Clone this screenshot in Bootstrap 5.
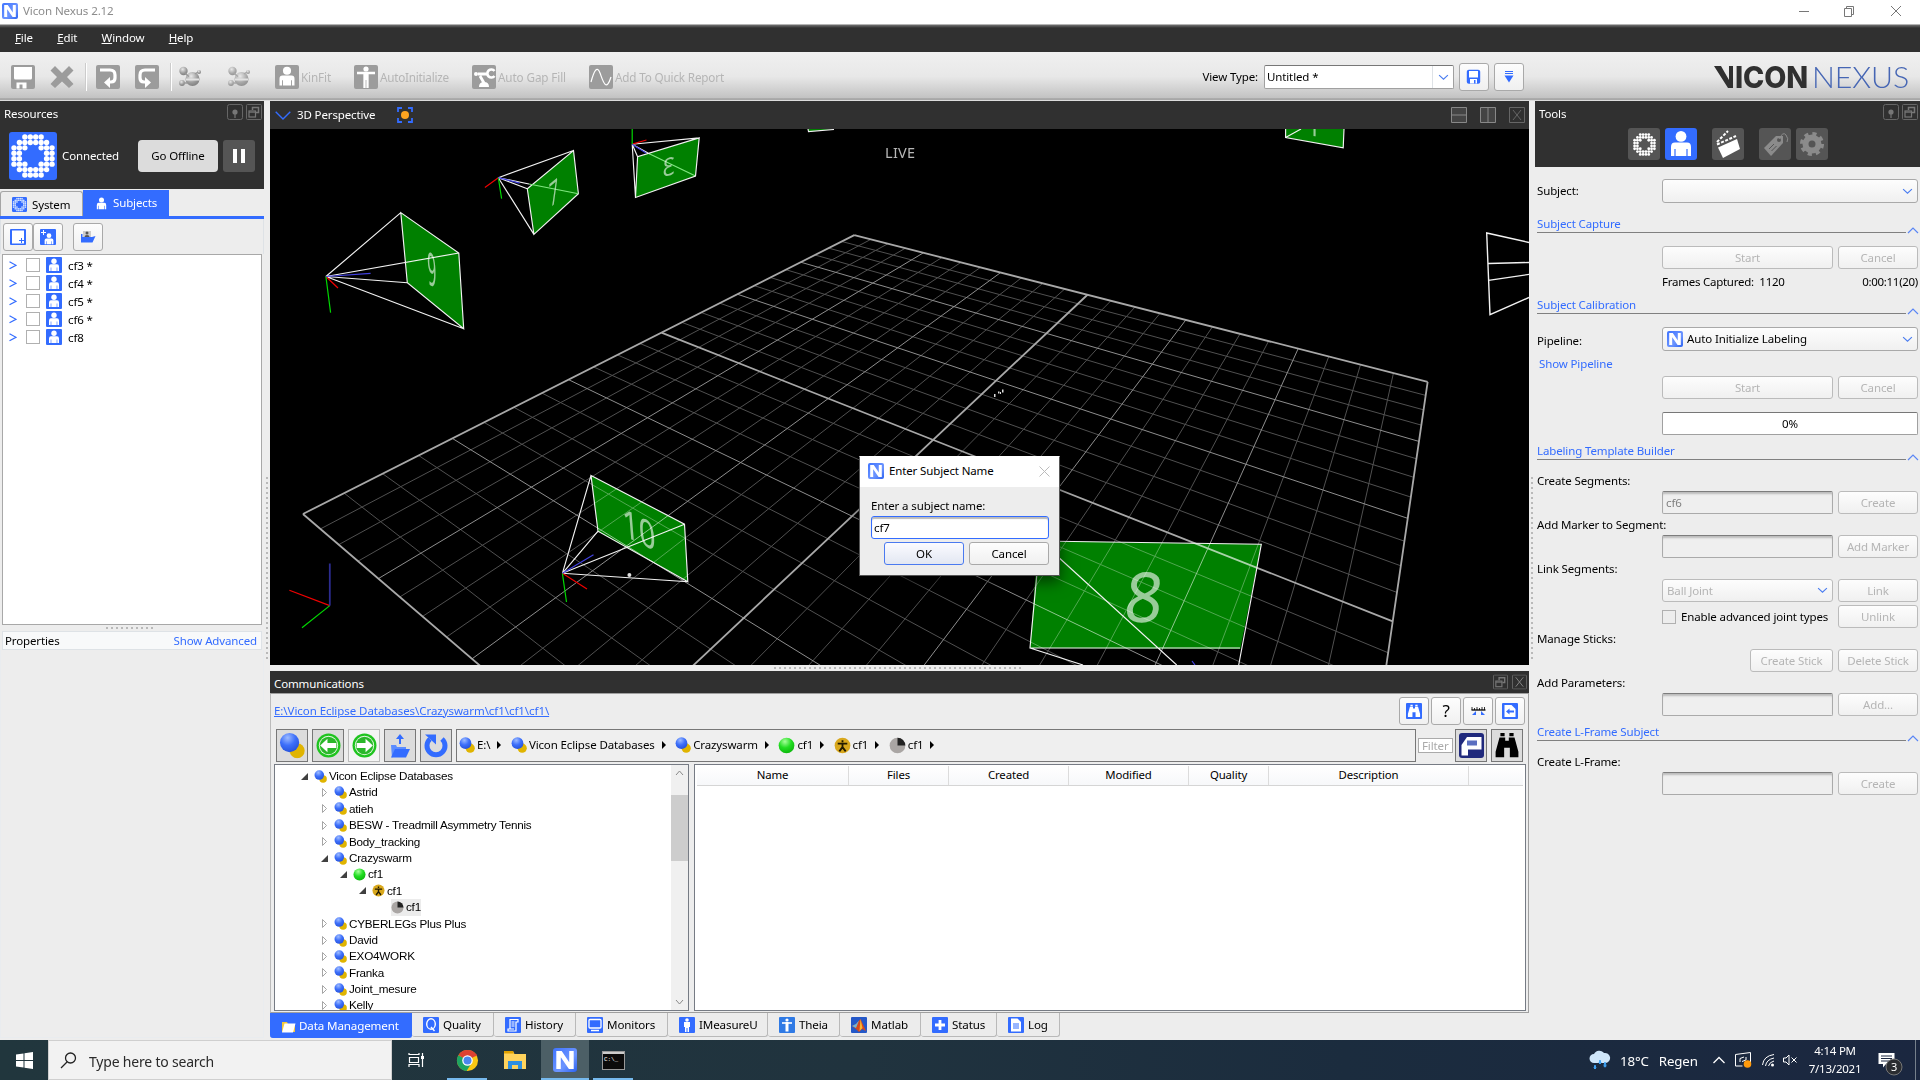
<!DOCTYPE html>
<html lang="en">
<head>
<meta charset="utf-8">
<title>Vicon Nexus 2.12</title>
<link href="https://cdn.jsdelivr.net/npm/bootstrap@5.3.0/dist/css/bootstrap.min.css" rel="stylesheet">
<style>
:root{--blue:#336cff;--dark:#303030;--face:#ededed}
html,body{height:1080px;width:1920px;overflow:hidden}
body{font-family:"Noto Sans","Open Sans",sans-serif;font-size:11.5px;letter-spacing:-.13px;line-height:16px;color:#000;background:var(--face);white-space:nowrap}
svg{display:block;flex:none}
.blue{color:var(--blue)}
.titlebar{height:24px;background:#fff;color:#8c8c8c;padding:0 18px 2px 2px}
.titlebar .cap{margin-left:5px;font-size:11.6px}
.menubar{height:28px;background:linear-gradient(#b4b4b4 0 1px,#6e6e6e 1px,#303030 4px);color:#fff;padding:0 0 0 15px}
.menubar span::first-letter{text-decoration:underline}
.menubar span{margin-right:24.300px}
.toolbar{height:49px;background:linear-gradient(#f0f0f0,#e8e8e8 50%,#c2c2c2 94%,#8f8f8f 96%,#dcdcdc 99%);color:#b5b5b5;padding:1px 12px 0 11px}
.logo{overflow:visible}
.vbtn{border:1px solid #a9a9a9;border-radius:3px;background:linear-gradient(#fdfdfd,#f0f0f0);display:flex;align-items:center;justify-content:center;flex:none}
.field{border:1px solid #a0a0a0;border-top-color:#777;border-radius:2px;background:#fff;display:flex;align-items:center}
.work{height:939px}
.panel-left{width:264px}
.dark{background:var(--dark);color:#fff}
.splitv{width:6px;position:relative}
.splitv::after{content:"";position:absolute;left:2px;top:376px;height:184px;width:2px;background:repeating-linear-gradient(#b9b9b9 0 2px,transparent 2px 5px)}
.tabsrow{height:27px;padding-top:1px}
.tab-sys{width:83px;height:26px;border:1px solid #a5a5a5;border-bottom:0;border-radius:3px 3px 0 0;padding-left:11px;margin-top:1px}
.tab-sub{width:86px;height:26px;background:var(--blue);color:#fff;padding-left:12px}
.tabgap{gap:5px}
.srow{height:18px;padding-left:6px}
.cbx{width:14px;height:14px;border:1px solid #b0b0b0;background:#fff;flex:none}
.ltree{height:371px;margin:0 2px;border:1px solid #a8a8a8;background:#fff;padding-top:1px}
.dots-h{background:repeating-linear-gradient(90deg,#b9b9b9 0 2px,transparent 2px 5px);height:2px}
.center{width:1259px}
.vhead{height:28px;padding-left:5px}
.comm{height:320px;border:1px solid #9f9f9f;border-left:1px solid #bbb;position:relative}
.dbtn{width:32px;height:33px;border:1px solid #777;background:#dcdcdc;display:flex;align-items:center;justify-content:center;flex:none}
.crumbs{width:960px;height:33px;border:1px solid #777;background:#efefef;padding:0 0 1px 2px;font-size:11.5px}
.crumbs span{margin:0 7px 0 2px}.crumbs b{border-left:4px solid #000;border-top:4px solid transparent;border-bottom:4px solid transparent;margin-right:9.500px}
.ctree{width:415px;height:247px;border:1px solid #767b84;background:#fff;overflow:hidden;font:11.7px/16.4px "Liberation Sans",Arial,sans-serif;letter-spacing:-.23px}
.crow{height:16.4px}
.crow .tg{width:9px;margin-right:5px}
.i1{padding-left:25px}.i2{padding-left:45px}.i3{padding-left:64px}.i4{padding-left:83px}.i5{padding-left:102px}
.sbar{width:17px;background:#f0f0f0;padding:5px 0}
.thumb{height:66px;background:#cdcdcd}
.clist{width:832px;height:247px;border:1px solid #767b84;background:#fff;margin-left:5px}
.chead{height:20px;border-bottom:1px solid #d5d5d5;margin:1px 2px;background:linear-gradient(#fff,#f7f8fa);text-align:center;font-size:11.4px;line-height:17px}
.chead div{border-right:1px solid #dcdcdc}
.btabs{height:27px}
.bt{height:24px;border:1px solid #b9b9b9;border-top:0;border-left:0;border-radius:0 0 3px 3px;display:flex;align-items:center;background:#ececec;padding-left:11px;padding-top:1px;gap:4px;font-size:11.6px}
.bt.act{height:25px;background:var(--blue);color:#fff;border-color:var(--blue);gap:3px;padding-top:2px}
.right{width:385px}
.ticon{width:32px;height:32px;border-radius:3px;background:#555;display:flex;align-items:center;justify-content:center}
.form{padding:12px 2px 0 2px}
.rr{height:23px;gap:5px;justify-content:flex-end}
.rr>.vbtn{height:23px;color:#b5b5b5;border-color:#bbb}
.w171{width:171px}.w80{width:80px}.w256{width:256px}.w83{width:83px}
.dis{background:#efefef;color:#808080;height:23px;border-color:#aaa;border-top-color:#7d7d7d;box-shadow:inset 0 3px 2px -1px #bbb;padding-left:3px}
.lab{height:21px;line-height:21px}
.sect{height:18px;color:var(--blue);line-height:18px;position:relative;margin-right:12px;border-bottom:1px solid #808080}
.sect svg{position:absolute;right:-13px;bottom:-2px}
.taskbar{height:40px;background:linear-gradient(90deg,#21363d,#20333e 45%,#1b2c3e 70%,#1b2740);color:#fff}
.search{width:344px;height:40px;background:#f2f2f2;border:1px solid #cfcfcf;color:#2a2a2a;font-size:14px;letter-spacing:-.2px;padding-left:11px;gap:12px}
.tk{height:40px;display:flex;align-items:center;justify-content:center}
.run{border-bottom:2px solid #76b9ed;padding-top:2px}
.dialog-box{position:absolute;left:859px;top:456px;width:201px;height:120px;background:var(--face);border:1px solid #555;box-shadow:0 6px 14px rgba(0,0,0,.55);border-top-color:#fff}
.dlg-title{height:30px;background:#fff;padding:0 9px 2px 8px}
</style>
<script src="https://cdn.jsdelivr.net/npm/bootstrap@5.3.0/dist/js/bootstrap.bundle.min.js"></script>
</head>
<body>
<svg width="0" height="0" class="position-absolute">
<defs>
<linearGradient id="ng" x1="0" y1="0" x2="1" y2="1"><stop offset="0" stop-color="#3f74ff"/><stop offset=".6" stop-color="#6d95ff"/><stop offset="1" stop-color="#2b62f0"/></linearGradient>
<radialGradient id="bg" cx=".4" cy=".25" r=".8"><stop offset="0" stop-color="#9dbbff"/><stop offset=".5" stop-color="#3d6ffa"/><stop offset="1" stop-color="#2450d8"/></radialGradient>
<radialGradient id="gg" cx=".4" cy=".25" r=".8"><stop offset="0" stop-color="#a6ff9a"/><stop offset=".5" stop-color="#22dd22"/><stop offset="1" stop-color="#0ab40a"/></radialGradient>
<radialGradient id="mg" cx=".4" cy=".3" r=".8"><stop offset="0" stop-color="#e8e8e8"/><stop offset=".6" stop-color="#999"/><stop offset="1" stop-color="#777"/></radialGradient>
<symbol id="n" viewBox="0 0 16 16"><rect width="16" height="16" rx="2" fill="url(#ng)"/><path d="M2.2 14V2H5.800l5 7.500V2h3v12H10.600L5.200 6.200V14z" fill="#fff"/></symbol>
<symbol id="man" viewBox="0 0 16 16"><circle cx="8" cy="4.200" r="2.700" fill="currentColor"/><path d="M3 14V9.500Q3 7.300 5 7.300h6q2 0 2 2.200V14h-1.700v-3.500h-.6V14H5.300v-3.500h-.6V14z" fill="currentColor"/></symbol>
<symbol id="bman" viewBox="0 0 16 16"><rect width="16" height="16" rx="1" fill="#336cff"/><use href="#man" color="#fff"/></symbol>
<symbol id="db" viewBox="0 0 16 16"><circle cx="11.200" cy="11.200" r="4.600" fill="#e0b400"/><circle cx="6.500" cy="6.200" r="5.900" fill="url(#bg)"/></symbol>
<symbol id="grn" viewBox="0 0 16 16"><circle cx="8" cy="8" r="7.400" fill="url(#gg)"/></symbol>
<symbol id="yel" viewBox="0 0 16 16"><circle cx="8" cy="8" r="7.400" fill="#d9a81c"/><path d="M8 3v2M3.500 6.300h9M8 6v4M8 9.500l-3 4M8 9.500l3 4" stroke="#221a00" stroke-width="1.700"/></symbol>
<symbol id="gry" viewBox="0 0 16 16"><circle cx="8" cy="8" r="7.400" fill="#aaa6a4"/><path d="M8 8V.7A7.300 7.300 0 0 1 15.300 8z" fill="#222"/></symbol>
<symbol id="vp" viewBox="0 0 16 16"><rect x=".5" y=".5" width="15" height="15" rx="2" fill="none" stroke="#666"/><circle cx="8" cy="8" r="2.600" fill="#777"/><path d="M8 9v5" stroke="#777" stroke-width="1.200"/></symbol>
<symbol id="fl" viewBox="0 0 16 16"><rect x=".5" y=".5" width="15" height="15" rx="1" fill="none" stroke="#666"/><path d="M6.500 6V3.500h6v5H10" fill="none" stroke="#777" stroke-width="1.500"/><rect x="3" y="7" width="6.500" height="6" fill="none" stroke="#777" stroke-width="1.200"/><path d="M3 8.200h6.500" stroke="#777"/></symbol>
<symbol id="xx" viewBox="0 0 16 16"><rect x=".5" y=".5" width="15" height="15" rx="1" fill="none" stroke="#666"/><path d="M4 3l8 10M12 3L4 13" stroke="#888"/></symbol>
<symbol id="dn" viewBox="0 0 10 6"><path d="M1 .8l4 3.800 4-3.800" fill="none" stroke="#4a7cf0"/></symbol>
<symbol id="up" viewBox="0 0 12 7"><path d="M1 6l5-5 5 5" fill="none" stroke="#5a86f5" stroke-width="1.200"/></symbol>
<symbol id="bino" viewBox="0 0 16 16"><path d="M3 2.800h3.800V5h2.400V2.800H13L15.600 12v3.500H9.900V9.500H6.100v6H.4V12zM3.600 0h2.800v2H3.600zM9.600 0h2.800v2H9.600z" fill="currentColor"/></symbol>
<symbol id="mol" viewBox="0 0 24 24"><circle cx="14.500" cy="14" r="7" fill="url(#mg)"/><circle cx="5.500" cy="6" r="4.200" fill="url(#mg)"/><circle cx="4" cy="18" r="2.900" fill="url(#mg)"/><circle cx="21" cy="7" r="2" fill="url(#mg)"/><path d="M8 14.500h13" stroke="#e2e2e2" stroke-width="2"/><path d="M7 8.500l4 3M6 18h3M17 9l3-2" stroke="#999" stroke-width="1.500"/></symbol>
<symbol id="ring" viewBox="0 0 48 48"><g id="ringdots" fill="currentColor"></g></symbol>
<symbol id="arrowL" viewBox="0 0 24 24"><circle cx="12" cy="12" r="11.500" fill="#1fc41f"/><circle cx="12" cy="12" r="9.300" fill="#e9f7e5"/><circle cx="12" cy="12" r="8.400" fill="#2ab82a"/><path d="M4 12l7-6.500v4h8.500v5H11v4z" fill="#fff"/></symbol>
</defs></svg>

<div class="titlebar d-flex align-items-center">
 <svg width="16" height="16"><use href="#n"/></svg><span class="cap">Vicon Nexus 2.12</span>
 <svg class="ms-auto" width="104" height="16" fill="none" stroke="#777"><path d="M1 8.500h10M46.500 5.500h7v8h-7zM48.500 5V3.500h7v8H54M93 3l10 10M103 3L93 13"/></svg>
</div>
<div class="menubar d-flex align-items-center"><span>File</span><span>Edit</span><span>Window</span><span>Help</span></div>
<div class="toolbar d-flex align-items-center">
 <svg width="713" height="28" viewBox="11 63 713 28">
  <g fill="#9c9c9c"><rect x="11" y="65" width="24" height="24" rx="2"/><rect x="96" y="65" width="24" height="24" rx="2"/><rect x="135" y="65" width="24" height="24" rx="2"/><rect x="275" y="65" width="24" height="24" rx="2"/><rect x="354" y="65" width="24" height="24" rx="2"/><rect x="472" y="65" width="24" height="24" rx="2"/><rect x="589" y="65" width="24" height="24" rx="2"/>
  <path d="M55 66l7 7 7-7 4.500 4.500-6.500 6.500 6.500 7L69 88l-7-6.500L55 88l-4.500-4L57 77l-6.500-6.500z"/></g>
  <path d="M14 67h18v11q0 1.500-1.500 1.500h-15Q14 79.500 14 78zM16.500 82.500h10v6h-4v-4h-3v4h-3z" fill="#fff"/>
  <path d="M100 70h10q5 0 5 5v3q0 4-4 4h-2" fill="none" stroke="#fff" stroke-width="3.200"/><path d="M110 77v11l-6-5.500z" fill="#fff"/>
  <path d="M155 70h-10q-5 0-5 5v3q0 4 4 4h2" fill="none" stroke="#fff" stroke-width="3.200"/><path d="M145 77v11l6-5.500z" fill="#fff"/>
  <path d="M86.500 63v28M171.500 63v28" stroke="#fff"/><path d="M85.500 63v28M170.500 63v28" stroke="#ccc"/>
  <use href="#mol" x="178" y="65" width="24" height="24"/><use href="#mol" x="227" y="65" width="24" height="24" opacity=".8"/>
  <use href="#man" x="275" y="64" width="24" height="25" color="#fff"/>
  <circle cx="366" cy="69" r="2.600" fill="#fff"/><path d="M357 73h18M366 72v8" stroke="#fff" stroke-width="2.600"/><path d="M364.500 73v15M367.500 73v15" stroke="#fff" stroke-width="2.300"/>
  <circle cx="476" cy="74" r="2" fill="#fff"/><path d="M478 74h10M480 76l4 7" stroke="#fff" stroke-width="2.800"/><path d="M494.500 71a4 4 0 1 0 0 5" stroke="#fff" stroke-width="2.600" fill="none"/><path d="M479 87q0-5 5-5t5 5z" fill="#fff"/>
  <path d="M591 82c3-11 6-17 9-9s6 20 11 4" fill="none" stroke="#fff" stroke-width="1.200"/>
  <g fill="#b5b5b5" font-size="11.700"><text x="301" y="82" textLength="30">KinFit</text><text x="380" y="82" textLength="69">AutoInitialize</text><text x="498" y="82" textLength="68">Auto Gap Fill</text><text x="615" y="82" textLength="109">Add To Quick Report</text></g>
 </svg>
 <div class="ms-auto d-flex align-items-center text-black">
  <span style="margin-right:6px">View Type:</span>
  <div class="field" style="width:190px;height:24px"><span class="ps-1 flex-grow-1" style="margin-left:-2px">Untitled *</span><div class="h-100 border-start d-flex align-items-center" style="padding:0 4px 0 5px"><svg width="11" height="7"><use href="#dn"/></svg></div></div>
  <div class="vbtn" style="width:30px;height:28px;margin-left:5px"><svg width="16" height="16"><rect x=".8" y=".8" width="13.400" height="14" rx="2" fill="#336cff"/><rect x="3" y="2" width="9" height="6.500" fill="#fff"/><path d="M4 10h7v4.500H4z" fill="#fff"/><path d="M8 11h1.500v3.500H8z" fill="#336cff"/></svg></div>
  <div class="vbtn" style="width:30px;height:28px;margin-left:5px"><svg width="10" height="12"><path d="M1 .5h8M1 2.500h8" stroke="#336cff"/><path d="M.5 4.500h9L5 11.500z" fill="#336cff"/></svg></div>
  <svg class="logo" width="384" height="28"><g font-family="Inter,sans-serif"><path d="M190 3h7l8 14V3h4v22h-5z" fill="#303030"/><text x="211" y="25" font-size="30" font-weight="800" fill="#303030" textLength="73" lengthAdjust="spacingAndGlyphs">ICON</text><text x="288" y="25" font-size="30" font-weight="300" font-family="Lato,sans-serif" fill="#4666b4" textLength="97" lengthAdjust="spacingAndGlyphs">NEXUS</text></g></svg>
 </div>
</div>

<div class="work d-flex">
 <div class="panel-left d-flex flex-column">
  <div class="dark" style="height:88px">
   <div class="d-flex align-items-center ps-1" style="height:22px;padding-right:2px"><span class="flex-grow-1 pt-1">Resources</span><svg width="16" height="16" style="margin-right:3px"><use href="#vp"/></svg><svg width="16" height="16"><use href="#fl"/></svg></div>
   <div class="d-flex align-items-center" style="height:66px;padding:0 9px;">
    <svg width="48" height="48" viewBox="0 0 48 48"><rect width="48" height="48" rx="3" fill="#336cff"/><use href="#ring" color="#fff"/></svg>
    <span style="margin-left:5px" class="flex-grow-1">Connected</span>
    <div class="d-flex align-items-center justify-content-center text-black rounded-1" style="width:80px;height:32px;background:#dcdcdc;margin-right:5px">Go Offline</div>
    <div class="ticon"><svg width="12" height="14"><path d="M0 0h4v14H0zM8 0h4v14H8z" fill="#fff"/></svg></div>
   </div>
  </div>
  <div class="tabsrow d-flex">
   <div class="tab-sys tabgap d-flex align-items-center"><svg width="15" height="15" viewBox="0 0 48 48"><rect width="48" height="48" rx="4" fill="#336cff"/><use href="#ring" color="#cfe0ff"/></svg>System</div>
   <div class="tab-sub tabgap d-flex align-items-center"><svg width="13" height="15" viewBox="2 0 12 16"><use href="#man" width="16" height="16"/></svg>Subjects</div>
  </div>
  <div style="height:3px;background:#336cff"></div>
  <div class="d-flex border-start border-end" style="height:35px;padding:4px 0 0 2px">
   <div class="vbtn" style="width:30px;height:28px"><svg width="16" height="16"><rect width="16" height="16" rx="1" fill="#336cff"/><rect x="2" y="1.500" width="12" height="13" fill="#fff"/><path d="M11.500 9v5M9 11.500h5" stroke="#336cff"/></svg></div>
   <div class="vbtn" style="width:30px;height:28px"><svg width="16" height="16"><rect width="16" height="16" rx="1" fill="#336cff"/><path d="M3.500 1v5M1 3.500h5" stroke="#fff"/><svg x="3" y="3" width="12" height="14" viewBox="2 0 12 16"><use href="#man" width="16" height="16" color="#fff"/></svg></svg></div>
   <div class="vbtn" style="width:30px;height:28px;margin-left:10px"><svg width="16" height="14"><path d="M3 1h8v6H3z" fill="#ccc"/><circle cx="7" cy="3" r="1.500" fill="#555"/><path d="M4.500 7q0-2 2.500-2t2.500 2z" fill="#555"/><path d="M1 4h1.500v3H12l3.500-1-3 6.500H1z" fill="#336cff"/></svg></div>
  </div>
  <div class="ltree" id="ltree"></div>
  <div class="d-flex justify-content-center align-items-center" style="height:6px;padding-right:5px"><div class="dots-h" style="width:48px"></div></div>
  <div class="d-flex justify-content-between border bg-body-tertiary" style="margin:0 2px;height:19px;padding:1px 4px 0 2px"><span>Properties</span><span class="blue">Show Advanced</span></div>
  <div class="flex-grow-1 border-start border-end border-bottom border-secondary-subtle" style="margin-bottom:2px"></div>
 </div>
 <div class="splitv"></div>
 <div class="center d-flex flex-column">
  <div class="dark vhead d-flex align-items-center">
   <svg width="16" height="9" viewBox="0 0 16 9"><path d="M.7.7L8 8 15.300.7" fill="none" stroke="#336cff" stroke-width="1.400"/></svg><span style="margin-left:6px;width:100px">3D Perspective</span>
   <svg width="16" height="16"><path d="M1 5V1h4M11 1h4v4M15 11v4h-4M5 15H1v-4" fill="none" stroke="#336cff" stroke-width="1.800"/><circle cx="8" cy="8" r="4" fill="#ffa51f"/></svg>
   <svg class="ms-auto" width="78" height="16" fill="none" stroke="#888"><path d="M.5.500h15v15H.5zM29.500.500h15v15h-15zM.5 8h15M37 .500v15" fill="#444"/><path d="M58.500.500h15v15h-15zM62 3l8 10M70 3l-8 10" stroke="#666"/></svg>
  </div>
  <svg width="1259" height="536" viewBox="270 129 1259 536" id="scene" style="background:#000" fill="none">
   <g id="grid"></g>
   <g fill="#008000" style="mix-blend-mode:screen"><path d="M400.800 212.600L458.800 253 463.700 328.800 407.300 282.800zM573.500 150.500L578.400 193.700 533.900 234.400 527.300 188.800zM699.200 137.900L695.500 176.100 635.500 197.500 637.600 156.800zM591 475.400L684.500 524.200 687.800 581.800 598 531.200zM1285.600 129V137.500L1343.200 147.700 1344 129zM808 129L808.500 131.600 834 129zM1038 541L1261.300 544.300 1240.300 649 1030 648z"/></g>
   <g stroke="#f2f2f2" stroke-width="1.150">
    <path d="M400.800 212.600L458.800 253 463.700 328.800 407.300 282.800zM325.900 276.500L400.800 212.600M325.900 276.500L458.800 253M325.900 276.500L463.700 328.800M325.900 276.500L407.300 282.800"/>
    <path d="M573.500 150.500L578.400 193.700 533.900 234.400 527.300 188.800zM498.300 177.700L573.500 150.500M498.300 177.700L529 184M498.300 177.700L533.900 234.400M498.300 177.700L527.300 188.800"/><path d="M529 184L578.400 193.700M649.800 154L695.500 176.100" stroke="#7fe67f"/>
    <path d="M699.200 137.900L695.500 176.100 635.500 197.500 637.600 156.800zM632.200 144.200L699.200 137.900M632.200 144.200L649.800 154M632.200 144.200L635.500 197.500M632.200 144.200L637.600 156.800"/>
    <path d="M591 475.400L684.500 524.200 687.800 581.800 598 531.200zM562.400 573.300L591 475.400M562.400 573.300L684.500 524.200M562.400 573.300L687.800 581.800M562.400 573.300L598 531.200"/>
    <path d="M1285.600 129V137.500L1343.200 147.700 1344 129M1285.600 137.500L1301 129M808 129l.5 2.600L834 129.500"/>
    <path d="M1529 242.500L1486.700 233 1490 314.700 1529 297.500M1488.500 263.500L1529 262.500M1488.500 280.400L1529 274.400" stroke-width="1.400"/>
    <path d="M1038 541L1261.300 544.300 1238.700 665M1036.700 576L1030 648H1240M1030 648L1083 665M1056 555L1176.700 665"/>
   </g>
   <g stroke="#f00000" stroke-width="1.200"><path d="M325.900 276.500L338 288M498.300 177.700L484.900 187.400M632.200 144.200L646.500 140M562.400 573.300L587 589M329.800 605.600L289.400 590.200"/></g>
   <g stroke="#00d800" stroke-width="1.200"><path d="M325.900 276.500L330.600 312.600M498.300 177.700L501.600 198.600M632.200 144.200V129M562.400 573.300L566.500 602M329.800 605.600L302 627.700"/></g>
   <g stroke="#4040e0" stroke-width="1.200"><path d="M325.900 276.500L370.600 273.300M498.300 177.700L519.600 183.200M632.200 144.200L646 153M562.400 573.300L593.500 554.700M1192 661l3 4"/><path d="M329.800 605.600V563.500" stroke="#2c2c90" stroke-width="1.800"/></g>
   <g fill="#fff" fill-opacity=".6" font-family="Noto Sans,sans-serif" text-anchor="middle">
    <text transform="matrix(.34 .2 .04 1 432.500 286)" font-size="46">9</text>
    <text transform="matrix(.5 -.42 .06 1 554.500 204)" font-size="32">7</text>
    <text transform="matrix(-.85 .26 -.03 1 668.500 175.500)" font-size="25">3</text>
    <text transform="matrix(.74 .37 .08 1 640 543.500)" font-size="39">10</text>
    <text transform="matrix(.97 0 -.1 1 1141.500 622)" font-size="69">8</text>
    <text transform="matrix(.9 .1 0 1 1314 136)" font-size="26">1</text>
   </g>
   <g fill="#ddd"><circle cx="629.400" cy="575" r="2"/><path d="M994 394h1.500v3H994zM998 391.500h1.500v2H998zM1002 389.500h1.500v3H1002zM1000 392h1v2h-1z"/></g>
   <text x="885" y="158" fill="#b8b8b8" font-size="14.500" textLength="30">LIVE</text>
  </svg>
  <div class="d-flex justify-content-center align-items-center" style="height:6px;padding-right:4px"><div class="dots-h" style="width:247px"></div></div>
  <div class="dark d-flex align-items-center ps-1" style="height:22px;padding-right:2px"><span class="flex-grow-1 pt-1">Communications</span><svg width="15" height="16" class="me-1" viewBox="0 0 16 16"><use href="#fl"/></svg><svg width="15" height="16" viewBox="0 0 16 16"><use href="#xx"/></svg></div>
  <div class="comm">
   <div class="d-flex align-items-center ps-1" style="height:35px;padding:0 3px 2px 0;gap:2px"><span class="blue text-decoration-underline flex-grow-1" style="margin-left:-1px;letter-spacing:-.06px">E:\Vicon Eclipse Databases\Crazyswarm\cf1\cf1\cf1\</span>
    <div class="vbtn" style="width:30px;height:28px"><svg width="16" height="16"><rect width="16" height="16" rx="1" fill="#336cff"/><svg x="1.500" y="1" width="13" height="14" viewBox="0 0 16 16"><use href="#bino" color="#fff"/></svg></svg></div>
    <div class="vbtn" style="width:30px;height:28px;font-size:17px">?</div>
    <div class="vbtn" style="width:30px;height:28px"><svg width="15" height="10"><path d="M.5 4h14" stroke="#000" stroke-width="1.300"/><path d="M1 1v3M3.500 2v2M6 1v3M8.500 2v2M11 1v3M13.500 1v3" stroke="#000" stroke-width=".8"/><path d="M1 9l4-4v4zM14 9l-4-4v4z" fill="#336cff"/></svg></div>
    <div class="vbtn" style="width:30px;height:28px"><svg width="16" height="16"><rect width="16" height="16" rx="1" fill="#336cff"/><path d="M2.500 2h7l4 4v8h-11z" fill="#fff"/><path d="M4 8.500l3.500-3v2H12v2H7.500v2z" fill="#336cff"/></svg></div>
   </div>
   <div class="d-flex align-items-center gap-1" style="padding-left:5px;margin-bottom:2px">
    <div class="dbtn"><svg width="26" height="27" viewBox="0 0 16 16"><use href="#db"/></svg></div>
    <div class="dbtn"><svg width="25" height="25"><use href="#arrowL"/></svg></div>
    <div class="dbtn" style="background:#f4f4f4;border-color:#bbb"><svg width="25" height="25" viewBox="0 0 24 24"><use href="#arrowL" transform="matrix(-1 0 0 1 24 0)" width="24" height="24"/></svg></div>
    <div class="dbtn"><svg width="22" height="26"><path d="M11 1l4 5h-3v5h-2V6H7z" fill="#336cff"/><path d="M2 12h5l1 2h9v2H7L3 25z" fill="#5b8cff"/><path d="M6 16h15l-4 8.500H2z" fill="#336cff"/></svg></div>
    <div class="dbtn"><svg width="26" height="26"><path d="M7 6A9 9 0 1 0 19 6" fill="none" stroke="#336cff" stroke-width="5"/><path d="M2 1.500h11v10z" fill="#336cff"/></svg></div>
    <div class="crumbs d-flex align-items-center"><svg width="16" height="16"><use href="#db"/></svg><span>E:\</span><b></b><svg width="16" height="16"><use href="#db"/></svg><span>Vicon Eclipse Databases</span><b></b><svg width="16" height="16"><use href="#db"/></svg><span>Crazyswarm</span><b></b><svg width="17" height="17"><use href="#grn"/></svg><span>cf1</span><b></b><svg width="17" height="17"><use href="#yel"/></svg><span>cf1</span><b></b><svg width="17" height="17"><use href="#gry"/></svg><span>cf1</span><b></b></div>
    <div class="d-flex align-items-center" style="margin-left:-2px;width:35px;height:15px;border:1px solid #aaa;background:#fff;color:#aaa;padding-left:3px">Filter</div>
    <div class="dbtn" style="margin-left:-2px"><svg width="25" height="25"><rect width="25" height="25" rx="3" fill="#20297c"/><path d="M2.500 22.500V12L8 4h14.500v12.500H9v6z" fill="#fff"/><rect x="8" y="7.500" width="10" height="5" fill="#5b6fc0"/></svg></div>
    <div class="dbtn"><svg width="24" height="25" viewBox="0 0 16 16" preserveAspectRatio="none"><use href="#bino" color="#000"/></svg></div>
   </div>
   <div class="d-flex" style="padding-left:3px">
    <div class="ctree d-flex"><div class="flex-grow-1" style="padding-top:3px" id="ctree"></div>
     <div class="sbar d-flex flex-column align-items-center"><svg width="9" height="6"><path d="M1 5l3.500-4L8 5" fill="none" stroke="#888"/></svg><div class="thumb w-100" style="margin-top:19px"></div><svg class="mt-auto" width="9" height="6"><path d="M1 1l3.500 4L8 1" fill="none" stroke="#888"/></svg></div></div>
    <div class="clist"><div class="chead d-flex"><div style="width:152px">Name</div><div style="width:100px">Files</div><div style="width:120px">Created</div><div style="width:120px">Modified</div><div style="width:80px">Quality</div><div style="width:200px">Description</div></div></div>
   </div>
  </div>
  <div class="btabs d-flex">
   <div class="bt act" style="width:142px"><svg width="15" height="15"><path d="M1 3h5l1 2h7v8H1z" fill="#f5c93a"/><path d="M3.500 4.500h11l-2.500 9H1z" fill="#fff"/></svg>Data Management</div>
   <div class="bt" style="width:82px"><svg width="16" height="16"><rect width="16" height="16" rx="1" fill="#336cff"/><ellipse cx="8" cy="7" rx="4.300" ry="5.200" fill="none" stroke="#fff" stroke-width="1.400"/><path d="M8 10l3.500 4" stroke="#fff" stroke-width="1.400"/></svg>Quality</div>
   <div class="bt" style="width:82px"><svg width="16" height="16"><rect width="16" height="16" rx="1" fill="#336cff"/><path d="M5 12V2.500h8V5h-2v9H3v-2h6M6.500 5h3M6.500 7h3M6.500 9h3" fill="none" stroke="#fff" stroke-width="1.200"/></svg>History</div>
   <div class="bt" style="width:92px"><svg width="16" height="16"><rect width="16" height="16" rx="1" fill="#336cff"/><rect x="2" y="2.500" width="12" height="8.500" rx="1" fill="#336cff" stroke="#fff" stroke-width="1.300"/><path d="M4 13.500h8" stroke="#fff" stroke-width="1.500"/></svg>Monitors</div>
   <div class="bt" style="width:100px"><svg width="16" height="16"><rect width="16" height="16" rx="1" fill="#336cff"/><circle cx="8" cy="3" r="1.800" fill="#fff"/><path d="M5 5h6v5h-1v5H8.500v-4h-1v4H6v-5H5z" fill="#fff"/></svg>IMeasureU</div>
   <div class="bt" style="width:72px"><svg width="16" height="16"><rect width="16" height="16" rx="1" fill="#2f7ae5"/><circle cx="8" cy="3" r="1.600" fill="#fff"/><path d="M3 6h10" stroke="#fff" stroke-width="1.600"/><path d="M8 5v9.500" stroke="#fff" stroke-width="3"/></svg>Theia</div>
   <div class="bt" style="width:81px"><svg width="16" height="16"><rect width="16" height="16" rx="1" fill="#2458c8"/><path d="M1 9l4-2 4.500-5 5.500 12-4-2-3 3-3-3z" fill="#d8491c"/><path d="M1 9l4-2 3-3.500L5 11z" fill="#6fb6d8"/><path d="M9.500 2l2 9-3 3z" fill="#f7b733"/></svg>Matlab</div>
   <div class="bt" style="width:76px"><svg width="16" height="16"><rect width="16" height="16" rx="1" fill="#336cff"/><path d="M8 3v10M3 8h10" stroke="#fff" stroke-width="2.800"/></svg>Status</div>
   <div class="bt" style="width:63px"><svg width="16" height="16"><rect width="16" height="16" rx="1" fill="#336cff"/><path d="M3 1.500h6.500l3.500 3.500v9.500H3z" fill="#fff"/><path d="M5 7h6M5 9h6M5 11h6" stroke="#336cff"/></svg>Log</div>
  </div>
 </div>
 <div class="splitv"></div>
 <div class="right">
  <div class="dark" style="height:66px">
   <div class="d-flex align-items-center ps-1" style="height:22px;padding-right:2px"><span class="flex-grow-1 pt-1">Tools</span><svg width="16" height="16" style="margin-right:3px"><use href="#vp"/></svg><svg width="16" height="16"><use href="#fl"/></svg></div>
   <div class="d-flex" style="padding:5px 0 0 93px">
    <div class="ticon" style="margin-right:5px"><svg width="25" height="25" viewBox="0 0 48 48"><use href="#ring" color="#fff"/></svg></div>
    <div class="ticon" style="background:#336cff;margin-right:15px"><svg width="32" height="32"><use href="#man" color="#fff"/></svg></div>
    <div class="ticon" style="margin-right:15px"><svg width="28" height="28"><path d="M4 17.500L23 9l3 10L9 28z" fill="#fff"/><path d="M3 14.500L22 6M3 12L14 1" stroke="#fff" stroke-width="2" stroke-dasharray="3 1.500"/></svg></div>
    <div class="ticon" style="margin-right:5px"><svg width="28" height="28"><path d="M3 18L15 6h7v7L10 26z" fill="#8b8b8b"/><circle cx="18" cy="10" r="2" fill="#555"/><path d="M8 19l5-5M10.500 21l5-5" stroke="#555"/><path d="M18 9q4-8 7-4t1 7" fill="none" stroke="#8b8b8b"/></svg></div>
    <div class="ticon"><svg width="26" height="26"><circle cx="13" cy="13" r="6.500" fill="none" stroke="#8b8b8b" stroke-width="6"/><circle cx="13" cy="13" r="10.300" fill="none" stroke="#8b8b8b" stroke-width="3.500" stroke-dasharray="4.100 4"/></svg></div>
   </div>
  </div>
  <div class="form">
   <div class="d-flex align-items-center" style="height:24px"><span class="flex-grow-1">Subject:</span><div class="vbtn w256 justify-content-end" style="height:24px;padding-right:4px"><svg width="11" height="7"><use href="#dn"/></svg></div></div>
   <div class="sect" style="margin-top:12px">Subject Capture<svg width="12" height="7"><use href="#up"/></svg></div>
   <div class="rr d-flex" style="margin-top:13px"><div class="vbtn w171">Start</div><div class="vbtn w80">Cancel</div></div>
   <div class="d-flex justify-content-between ms-auto w256 align-items-center" style="height:27px;padding-bottom:1px"><span style="letter-spacing:-.25px">Frames Captured:&nbsp; 1120</span><span style="letter-spacing:-.3px">0:00:11(20)</span></div>
   <div class="sect">Subject Calibration<svg width="12" height="7"><use href="#up"/></svg></div>
   <div class="d-flex align-items-center" style="height:24px;margin-top:13px"><span class="flex-grow-1 pt-1">Pipeline:</span><div class="vbtn w256 justify-content-start ps-1" style="height:24px"><svg width="16" height="16"><use href="#n"/></svg><span class="flex-grow-1 ps-1">Auto Initialize Labeling</span><svg width="11" height="7" style="margin-right:4px"><use href="#dn"/></svg></div></div>
   <div class="blue" style="height:25px;line-height:25px;padding-left:2px">Show Pipeline</div>
   <div class="rr d-flex"><div class="vbtn w171">Start</div><div class="vbtn w80">Cancel</div></div>
   <div class="field w256 ms-auto justify-content-center" style="height:23px;margin-top:13px">0%</div>
   <div class="sect" style="margin-top:7px">Labeling Template Builder<svg width="12" height="7"><use href="#up"/></svg></div>
   <div class="lab" style="margin-top:10px">Create Segments:</div>
   <div class="rr d-flex"><div class="field dis w171">cf6</div><div class="vbtn w80">Create</div></div>
   <div class="lab">Add Marker to Segment:</div>
   <div class="rr d-flex"><div class="field dis w171"></div><div class="vbtn w80">Add Marker</div></div>
   <div class="lab">Link Segments:</div>
   <div class="rr d-flex"><div class="vbtn w171 justify-content-between ps-1" style="padding-right:4px">Ball Joint<svg width="11" height="7"><use href="#dn"/></svg></div><div class="vbtn w80">Link</div></div>
   <div class="rr d-flex align-items-center" style="margin-top:3px"><div class="w171 d-flex align-items-center"><i class="cbx bg-transparent"></i><span style="margin-left:5px">Enable advanced joint types</span></div><div class="vbtn w80">Unlink</div></div>
   <div class="lab">Manage Sticks:</div>
   <div class="rr d-flex"><div class="vbtn w83">Create Stick</div><div class="vbtn w80">Delete Stick</div></div>
   <div class="lab">Add Parameters:</div>
   <div class="rr d-flex"><div class="field dis w171"></div><div class="vbtn w80">Add...</div></div>
   <div class="sect" style="margin-top:7px">Create L-Frame Subject<svg width="12" height="7"><use href="#up"/></svg></div>
   <div class="lab" style="margin-top:10px">Create L-Frame:</div>
   <div class="rr d-flex"><div class="field dis w171"></div><div class="vbtn w80">Create</div></div>
  </div>
 </div>
</div>

<div class="taskbar d-flex">
 <div class="tk" style="width:48px"><svg width="17" height="17"><path d="M0 2.500l7.500-1V8H0zM8.500 1.300L17 0v8H8.500zM0 9h7.500v6.500L0 14.500zM8.500 9H17v8l-8.500-1.300z" fill="#fff"/></svg></div>
 <div class="search d-flex align-items-center"><svg width="17" height="17" fill="none" stroke="#222" stroke-width="1.300"><circle cx="10.500" cy="6" r="5"/><path d="M7 10L1 16"/></svg><span class="pt-1">Type here to search</span></div>
 <div class="tk" style="width:48px"><svg width="17" height="16" fill="none" stroke="#fff" stroke-width="1.200"><path d="M1.500 5.500h9v5h-9zM1 3V1M11 3V1M1 2.500h10M1 15v-2.500h10V15M14.500 1v14"/><path d="M13 4h3v3h-3z" fill="#fff" stroke="none"/></svg></div>
 <div class="tk run" style="width:40px;margin-left:7px"><svg width="23" height="23" viewBox="0 0 24 24"><circle cx="12" cy="12" r="11" fill="#f9c713"/><path d="M12 12L2.500 6.500A11 11 0 0 1 21.600 6.500z" fill="#dd4132"/><path d="M12 12L2.500 6.500A11 11 0 0 0 11 23l5-8z" fill="#1da462"/><path d="M12 6.500h9.600" stroke="#dd4132" stroke-width="2"/><circle cx="12" cy="12" r="5.500" fill="#fff"/><circle cx="12" cy="12" r="4.200" fill="#4a86ee"/></svg></div>
 <div class="tk" style="width:54px;margin-left:1px"><svg width="22" height="20"><path d="M0 1h9l1.500 3H22v15H0z" fill="#ffd35c"/><path d="M0 1h9l1 2.500H0z" fill="#e0a100"/><path d="M4 19v-8h14v8h-4v-4H8v4z" fill="#2f8fe0"/></svg></div>
 <div class="tk run" style="width:48px;margin-left:-1px;background:#4c5f66"><svg width="24" height="24"><use href="#n"/></svg></div>
 <div class="tk run" style="width:40px;margin-left:4px"><svg width="23" height="19"><rect x=".5" y=".5" width="22" height="18" fill="#0b0b0b" stroke="#999"/><path d="M1 2h21" stroke="#ccc" stroke-width="2"/><text x="2" y="10" font-size="6" fill="#fff" font-family="Liberation Mono,monospace">C:\_</text></svg></div>
 <div class="ms-auto d-flex align-items-center" style="font-size:13.300px">
  <svg width="22" height="20"><path d="M5 13a4.500 4.500 0 0 1 0-9 6 6 0 0 1 10-1 5 5 0 0 1 2 10z" fill="#cfe6fa"/><path d="M6 15q-2 4 0 4t0-4M11 10q-2 4 0 4t0-4M16 12q-2 5 0 5t0-5" fill="#3fa3f5" stroke="#3fa3f5"/></svg>
  <span style="margin-left:9px;width:93px;padding-top:2px">18°C&nbsp;&nbsp; Regen</span>
  <svg width="85" height="20" viewBox="1713 1050 85 20" fill="none" stroke="#fff"><path d="M1713.500 1063l5.500-5.500 5.500 5.500" stroke-width="1.300"/><path d="M1735.500 1054.500l15-2v13M1735.500 1054.500v11.500h7M1740 1062v-3.500l4-1.500M1746 1057v3l-4 1.500"/><circle cx="1747.500" cy="1064" r="3.800" fill="#ff9a0c" stroke="none"/><path d="M1762.500 1065q1-9 11.500-10.500M1765.500 1066q1-6.500 8.500-8M1768.500 1066q1-4 5.500-5"/><circle cx="1772.500" cy="1065" r="1.500" fill="#fff" stroke="none"/><path d="M1783.500 1058v4h2.500l3 3v-10l-3 3zM1791.500 1057.500l5 5M1796.500 1057.500l-5 5"/></svg>
  <div class="text-center" style="width:74px;font-size:11.500px;letter-spacing:-.22px;line-height:18px">4:14 PM<br>7/13/2021</div>
  <svg width="47" height="40" style="margin-left:1px"><path d="M5.500 13h16v11H13l-3 3.500V24H5.500z" fill="#fff"/><path d="M8 16h11M8 18.500h11M8 21h8" stroke="#1b2740"/><circle cx="21" cy="27" r="8" fill="#2b2d31" stroke="#777"/><text x="21" y="31" font-size="11" fill="#fff" text-anchor="middle">3</text><path d="M42.500 0v40" stroke="#76808c"/></svg>
 </div>
</div>

<div class="dialog-box">
 <div class="dlg-title d-flex align-items-center"><svg width="16" height="16"><use href="#n"/></svg><span class="flex-grow-1" style="margin-left:5px">Enter Subject Name</span><svg width="11" height="11"><path d="M.5.500l10 10M10.500.500l-10 10" stroke="#bbb"/></svg></div>
 <div style="padding:11px 10px 0 11px"><div>Enter a subject name:</div>
  <div class="field" style="height:23px;margin-top:2px;border-color:#336cff;border-radius:3px;padding-left:2px;box-shadow:inset 0 2px 1px #bbb">cf7</div>
  <div class="d-flex justify-content-end" style="gap:5px;margin-top:3px"><div class="vbtn w80" style="height:23px;border-color:#4a7af0;background:linear-gradient(#fbfbff,#e2e7f2)">OK</div><div class="vbtn w80" style="height:23px">Cancel</div></div>
 </div>
</div>

<script>
const NS='http://www.w3.org/2000/svg';
// Floor plane: 24 x 24 cells projected through a homography, u and v run 0..6
function proj(u,v){const w=1-.0524*u-.077*v;return [(20.75*u-115.22*v+854.3)/w,(4.44*u+6.905*v+235.1)/w];}
let minor='',major='',thick='';
for(let i=0;i<=24;i++){const t=i/4,a=proj(t,0),b=proj(t,6),c=proj(0,t),d=proj(6,t);
 const s=`M${a}L${b}M${c}L${d}`;
 if(i%12===0)thick+=s;else if(i%4===0)major+=s;else minor+=s;}
document.getElementById('grid').innerHTML=`<path d="${minor}" stroke="#505050"/><path d="${major}" stroke="#8e8e8e"/><path d="${thick}" stroke="#a8a8a8" stroke-width="1.8"/>`;
// Ring of dots used by the system icon
const rows=['..####..','.######.','###..###','##....##','##....##','###..###','.######.','..####..'];
let dots='';rows.forEach((r,y)=>[...r].forEach((c,x)=>{if(c==='#')dots+=`<circle cx="${5+x*5.43}" cy="${5+y*5.43}" r="2.7"/>`}));
document.getElementById('ringdots').innerHTML=dots;
document.getElementById('ltree').innerHTML=['cf3 *','cf4 *','cf5 *','cf6 *','cf8'].map(t=>`<div class="srow d-flex align-items-center"><svg width="8" height="9"><path d="M.5.8L7 4.300.5 7.800" fill="none" stroke="#336cff" stroke-width="1.200"/></svg><i class="cbx" style="margin:0 6px 0 9px"></i><svg width="16" height="16"><use href="#bman"/></svg><span style="margin-left:6px;padding-top:1px">${t}</span></div>`).join('');
const tree=[[1,1,'db','Vicon Eclipse Databases'],[2,0,'db','Astrid'],[2,0,'db','atieh'],[2,0,'db','BESW - Treadmill Asymmetry Tennis'],[2,0,'db','Body_tracking'],[2,1,'db','Crazyswarm'],[3,1,'grn','cf1'],[4,1,'yel','cf1'],[5,2,'gry','cf1'],[2,0,'db','CYBERLEGs Plus Plus'],[2,0,'db','David'],[2,0,'db','EXO4WORK'],[2,0,'db','Franka'],[2,0,'db','Joint_mesure'],[2,0,'db','Kelly']];
const tg=['<path d="M2.500 1.500l4 4-4 4z" fill="#fff" stroke="#a5a5a5"/>','<path d="M8 2v7H1z" fill="#404040"/>',''];
document.getElementById('ctree').innerHTML=tree.map(([l,o,i,t])=>`<div class="crow d-flex align-items-center i${l}"><svg class="tg" width="9" height="11">${tg[o]}</svg><span class="d-flex align-items-center" ${o===2?'style="background:#ececec"':''}><svg width="13" height="13" viewBox="0 0 16 16"><use href="#${i}" width="16" height="16"/></svg><span style="margin-left:2px">${t}</span></span></div>`).join('');
</script>
</body>
</html>
